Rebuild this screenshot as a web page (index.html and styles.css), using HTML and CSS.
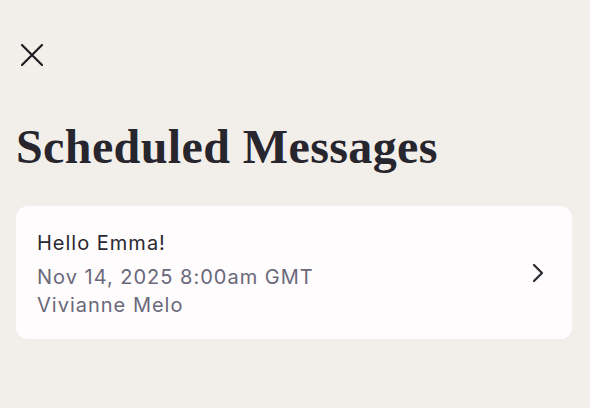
FILE: index.html
```html
<!DOCTYPE html>
<html>
<head>
<meta charset="utf-8">
<link rel="stylesheet" href="styles.css">
</head>
<body>
<div class="page">
  <button class="close" aria-label="Close">
    <svg width="22" height="22" viewBox="0 0 22 22"><path d="M1 1 L21 21 M21 1 L1 21" stroke="#1c1b1f" stroke-width="2.2" fill="none" stroke-linecap="round"/></svg>
  </button>
  <h1 class="title">Scheduled Messages</h1>
  <div class="card">
    <div class="card-text">
      <div class="msg">Hello Emma!</div>
      <div class="meta">Nov 14, 2025 8:00am GMT</div>
      <div class="meta">Vivianne Melo</div>
    </div>
    <svg class="chev" width="12" height="20" viewBox="0 0 12 20"><path d="M2 2 L10 10 L2 18" stroke="#2a2930" stroke-width="2.2" fill="none" stroke-linecap="round" stroke-linejoin="round"/></svg>
  </div>
</div>
</body>
</html>
```
FILE: styles.css
```css
html, body {
  margin: 0;
  padding: 0;
  background: #f2efea;
  height: 100%;
}
.page {
  padding: 44px 18px 0 16px;
  display: flex;
  flex-direction: column;
}
.close {
  width: 22px;
  height: 22px;
  padding: 0;
  margin-left: 5px;
  border: none;
  background: none;
  display: flex;
}
.title {
  margin: 53px 0 0 0;
  font-family: "Liberation Serif", "DejaVu Serif", serif;
  font-weight: 700;
  font-size: 48px;
  line-height: 56px;
  color: #27252d;
  letter-spacing: 0.4px;
}
.card {
  margin-top: 31px;
  height: 133px;
  box-sizing: border-box;
  background: #fffcfd;
  border-radius: 12px;
  padding: 2px 28px 0 21px;
  display: flex;
  align-items: center;
  justify-content: space-between;
}
.card-text {
  display: flex;
  flex-direction: column;
  font-family: Inter, "Liberation Sans", sans-serif;
  letter-spacing: 1px;
}
.msg {
  font-size: 20px;
  line-height: 28px;
  color: #2a2930;
  margin-bottom: 6px;
}
.meta {
  font-size: 20px;
  line-height: 28px;
  color: #6a687b;
}
.chev {
  display: block;
  margin-top: -2px;
}
```
